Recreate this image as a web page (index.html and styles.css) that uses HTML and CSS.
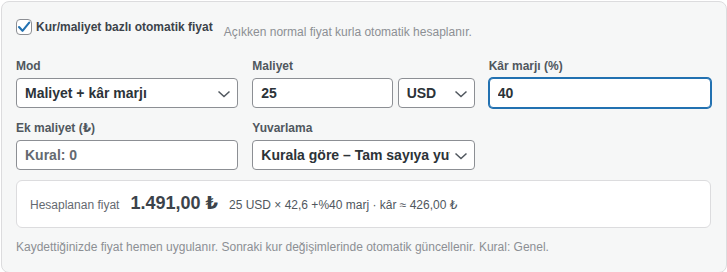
FILE: index.html
```html
<!DOCTYPE html>
<html lang="tr">
<head>
<meta charset="utf-8">
<title>Otomatik fiyat</title>
<link rel="stylesheet" href="styles.css">
</head>
<body>
<div class="card">
  <div class="toggle-row">
    <label class="toggle">
      <span class="check">
        <svg class="check-mark" viewBox="0 0 16 16" width="16" height="16" aria-hidden="true"><polyline points="3,8 6.5,11.8 13.2,3.6" fill="none" stroke="#2271b1" stroke-width="2.1" stroke-linecap="round" stroke-linejoin="round"/></svg>
      </span>
      <span class="toggle-text">Kur/maliyet bazlı otomatik fiyat</span>
    </label>
    <span class="hint">Açıkken normal fiyat kurla otomatik hesaplanır.</span>
  </div>

  <div class="grid">
    <div class="field">
      <label class="lbl">Mod</label>
      <span class="sel-wrap">
        <select class="ctl sel"><option>Maliyet + kâr marjı</option></select>
        <svg class="chev" viewBox="0 0 16 16" width="16" height="16" aria-hidden="true"><polyline points="2.5,5.5 8,10.5 13.5,5.5" fill="none" stroke="#50575e" stroke-width="1.5"/></svg>
      </span>
    </div>
    <div class="field">
      <label class="lbl">Maliyet</label>
      <div class="pair">
        <input class="ctl inp" value="25">
        <span class="sel-wrap cur">
          <select class="ctl sel"><option>USD</option></select>
          <svg class="chev" viewBox="0 0 16 16" width="16" height="16" aria-hidden="true"><polyline points="2.5,5.5 8,10.5 13.5,5.5" fill="none" stroke="#50575e" stroke-width="1.5"/></svg>
        </span>
      </div>
    </div>
    <div class="field">
      <label class="lbl">Kâr marjı (%)</label>
      <input class="ctl inp is-focused" value="40">
    </div>
    <div class="field">
      <label class="lbl">Ek maliyet (₺)</label>
      <input class="ctl inp" placeholder="Kural: 0">
    </div>
    <div class="field">
      <label class="lbl">Yuvarlama</label>
      <span class="sel-wrap">
        <select class="ctl sel"><option>Kurala göre – Tam sayıya yuvarla</option></select>
        <svg class="chev" viewBox="0 0 16 16" width="16" height="16" aria-hidden="true"><polyline points="2.5,5.5 8,10.5 13.5,5.5" fill="none" stroke="#50575e" stroke-width="1.5"/></svg>
      </span>
    </div>
  </div>

  <div class="result">
    <span class="r-label">Hesaplanan fiyat</span>
    <strong class="r-price">1.491,00 ₺</strong>
    <span class="r-detail">25 USD × 42,6 +%40 marj · kâr ≈ 426,00 ₺</span>
  </div>

  <p class="note">Kaydettiğinizde fiyat hemen uygulanır. Sonraki kur değişimlerinde otomatik güncellenir. Kural: Genel.</p>
</div>
</body>
</html>
```

FILE: styles.css
```css
* { box-sizing: border-box; }

html, body { margin: 0; }

body {
  padding: 1px 0 0 1px;
  background: #ffffff;
  font-family: "Liberation Sans", Arial, "DejaVu Sans", sans-serif;
  color: #2c3338;
}

.card {
  background: #f6f7f7;
  border: 1px solid #dcdcde;
  border-radius: 8px;
  padding: 16px 15px 17px 14px;
}

.toggle-row {
  display: flex;
  align-items: flex-start;
  height: 18px;
}

.toggle {
  display: flex;
  align-items: center;
  gap: 4px;
  font-size: 12px;
  line-height: 18px;
  font-weight: bold;
  color: #3c434a;
}

.check {
  position: relative;
  width: 16px;
  height: 16px;
  border: 1px solid #8c8f94;
  border-radius: 4px;
  background: #fff;
  flex: none;
}

.check-mark {
  position: absolute;
  left: -1px;
  top: -1px;
}

.hint {
  margin-left: 11px;
  padding-top: 5px;
  font-size: 12px;
  line-height: 18px;
  color: #8c8f94;
}

.grid {
  margin-top: 22px;
  display: grid;
  grid-template-columns: repeat(3, 1fr);
  column-gap: 14px;
  row-gap: 12px;
}

.field {
  display: flex;
  flex-direction: column;
  min-width: 0;
}

.lbl {
  display: block;
  font-size: 12px;
  line-height: 16px;
  font-weight: bold;
  color: #50575e;
  margin-bottom: 4px;
}

.ctl {
  display: block;
  width: 100%;
  height: 30px;
  margin: 0;
  padding: 0 8px;
  border: 1px solid #8c8f94;
  border-radius: 4px;
  background: #fff;
  font-family: "Liberation Sans", Arial, "DejaVu Sans", sans-serif;
  font-size: 14px;
  font-weight: bold;
  color: #2c3338;
  outline: none;
}

.inp::placeholder {
  color: #646970;
  opacity: 1;
}

.sel {
  -webkit-appearance: none;
  appearance: none;
  padding-right: 24px;
}

.sel-wrap {
  position: relative;
  display: block;
}

.chev {
  position: absolute;
  right: 6px;
  top: 8px;
  pointer-events: none;
}

.pair {
  display: flex;
  gap: 5px;
}

.pair .inp {
  flex: 1;
  min-width: 0;
}

.pair .cur {
  width: 77px;
  flex: none;
}

.is-focused {
  border-color: #2271b1;
  box-shadow: 0 0 0 1px #2271b1;
}

.result {
  margin-top: 10px;
  display: flex;
  align-items: baseline;
  gap: 11px;
  padding: 12px 13px;
  background: #fff;
  border: 1px solid #dcdcde;
  border-radius: 6px;
  line-height: 20px;
}

.r-label {
  font-size: 12px;
  color: #646970;
}

.r-price {
  font-size: 18px;
  font-weight: bold;
  color: #3c434a;
}

.r-detail {
  font-size: 12px;
  color: #50575e;
}

.note {
  margin: 11px 0 0;
  font-size: 12px;
  line-height: 16px;
  color: #8c8f94;
}
```
